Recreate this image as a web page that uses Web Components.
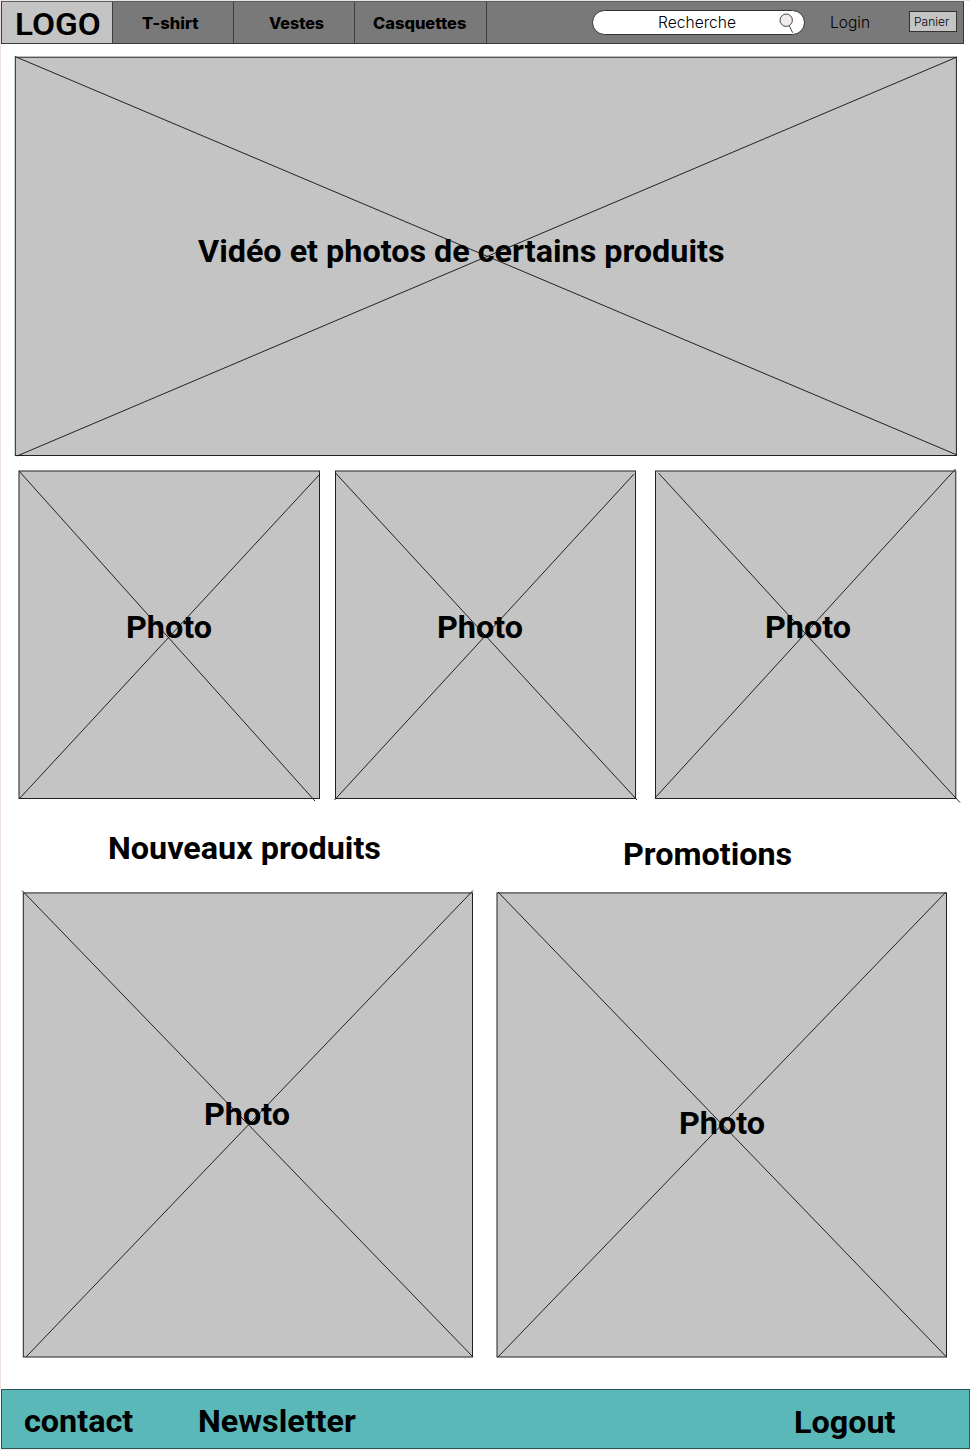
<!DOCTYPE html>
<html lang="fr">
<head>
<meta charset="utf-8">
<title>Boutique</title>
<style>
html,body{margin:0;padding:0;background:#fff}
</style>
</head>
<body>
<shop-page></shop-page>
<script>
// Single line of text; "fit" stretches the line to a given width in px.
class TextLabel extends HTMLElement {
  connectedCallback() {
    const s = this.attachShadow({mode: 'open'});
    s.innerHTML = `<style>
      :host{display:block;white-space:nowrap;font:700 32px/38px Roboto,sans-serif;color:#000}
      :host([kind=logo]){font-weight:600}
      :host([kind=nav]){font:800 15.5px/20px Inter,sans-serif}
      :host([kind=light]){font:300 15.5px/20px Inter,sans-serif}
      :host([kind=small]){font:300 12px/16px Inter,sans-serif}
      span{display:inline-block;transform-origin:0 0;transform:scaleX(1.0105)}
    </style><span><slot></slot></span>`;
    const fit = +this.getAttribute('fit');
    if (fit) {
      const span = s.querySelector('span');
      span.style.transform = `scaleX(${fit / span.offsetWidth})`;
      this.style.width = fit + 'px';
    }
  }
}
customElements.define('text-label', TextLabel);

// Crossed placeholder box. rect = "l t r b" edges, lines = "x1 y1 x2 y2 ..." in box units.
class PhotoFrame extends HTMLElement {
  connectedCallback() {
    const [l, t, r, b] = this.getAttribute('rect').split(' ').map(Number);
    const n = this.getAttribute('lines').split(' ').map(Number);
    const line = i => `<line x1="${n[i]}" y1="${n[i+1]}" x2="${n[i+2]}" y2="${n[i+3]}"/>`;
    this.attachShadow({mode: 'open'}).innerHTML = `<style>
      :host{display:block;position:relative}
      svg{display:block;width:100%;height:100%;overflow:visible}
      ::slotted(*){position:absolute;left:var(--lx);top:var(--ly)}
    </style>
    <svg stroke="#222" stroke-width="1"><rect x="${l}" y="${t}" width="${r-l}" height="${b-t}" fill="#c4c4c4"/>${line(0)}${line(4)}</svg><slot></slot>`;
  }
}
customElements.define('photo-frame', PhotoFrame);

class SearchBox extends HTMLElement {
  constructor() {
    super();
    this.attachShadow({mode: 'open'}).innerHTML = `<style>
      :host{display:flex;box-sizing:border-box;width:213px;height:25px;border:1px solid #333;border-radius:13px;background:#fff;padding:1px 8px 0 65px;justify-content:space-between}
      text-label{margin-top:1px}
      svg{display:block;width:18px;height:22px;overflow:visible}
    </style><text-label kind="light" fit="77.5">Recherche</text-label>
    <svg viewBox="0 0 18 22" fill="none" stroke="#333" stroke-width="0.9"><circle cx="8.2" cy="8.2" r="6.2" fill="#f1eded"/><path d="M11.2 13.7 14.7 20.7"/></svg>`;
  }
}
customElements.define('search-box', SearchBox);

class ShopHeader extends HTMLElement {
  constructor() {
    super();
    this.attachShadow({mode: 'open'}).innerHTML = `<style>
      :host{display:flex;box-sizing:border-box;width:963px;height:43px;margin-left:1px;background:#797979;border:1px solid #3c3a3b;border-top-color:#5c625b}
      .c{box-sizing:border-box;border-right:1px solid #3f3d3e;height:41px;display:flex;align-items:flex-start}
      .logo{width:111px;background:#c4c4c4;padding:3px 0 0 13px}
      .a{width:121px;padding:12px 0 0 29px}
      .b{width:121px;padding:12px 0 0 35px}
      .d{width:132px;padding:12px 0 0 18px}
      search-box{margin:8px 0 0 105px}
      .login{margin:11px 0 0 25px}
      .cart{box-sizing:border-box;width:48px;height:21px;border:1px solid #333;background:#c4c4c4;margin:9px 0 0 39px;padding:2px 0 0 4px}
    </style>
    <div class="c logo"><text-label kind="logo" fit="85.5">LOGO</text-label></div>
    <div class="c a"><text-label kind="nav" fit="56.5">T-shirt</text-label></div>
    <div class="c b"><text-label kind="nav" fit="55">Vestes</text-label></div>
    <div class="c d"><text-label kind="nav" fit="93.5">Casquettes</text-label></div>
    <search-box></search-box>
    <text-label class="login" kind="light" fit="40">Login</text-label>
    <div class="cart"><text-label kind="small" fit="35">Panier</text-label></div>`;
  }
}
customElements.define('shop-header', ShopHeader);

class ShopFooter extends HTMLElement {
  constructor() {
    super();
    this.attachShadow({mode: 'open'}).innerHTML = `<style>
      :host{display:flex;box-sizing:border-box;width:969px;height:60px;margin-left:1px;background:#5ab8b8;border:1px solid #2d5555;padding:12px 74.5px 0 22px}
      .n{margin-left:65.5px}.o{margin:1px 0 0 auto}
    </style>
    <text-label>contact</text-label><text-label class="n">Newsletter</text-label><text-label class="o">Logout</text-label>`;
  }
}
customElements.define('shop-footer', ShopFooter);

class ShopPage extends HTMLElement {
  constructor() {
    super();
    this.attachShadow({mode: 'open'}).innerHTML = `<style>
      :host{display:flex;flex-direction:column;box-sizing:border-box;width:970px;height:1450px;background:linear-gradient(#eee2e1,#eee2e1) 0 0/1px 1389px no-repeat,linear-gradient(#eee5e3,#eee5e3) 0 0/970px 1px no-repeat,linear-gradient(#eee,#eee) 0 1449px/970px 1px no-repeat,#fff;padding-top:1px;overflow:hidden}
      .hero{width:943px;height:400px;margin:12px 0 0 15px;--lx:183px;--ly:176px}
      .three{display:flex;height:329px;margin:14px 0 0 18px}
      .three photo-frame{width:302px}
      .three photo-frame+photo-frame{margin-left:15px}
      .three photo-frame:last-child{margin-left:18px}
      .heads{display:grid;grid-template-columns:515px 1fr;padding:30px 0 0 108px;height:93px;box-sizing:border-box}
      .p{margin-top:6px}
      .two{display:flex;gap:24px;height:466px;padding-left:23px}
      .two photo-frame{width:450px}
      shop-footer{margin-top:31px}
    </style>
    <shop-header></shop-header>
    <photo-frame class="hero" rect="0.3 1.2 941.4 399.5" lines="0 0.5 942 399 942 1 2 400"><text-label>Vidéo et photos de certains produits</text-label></photo-frame>
    <div class="three">
      <photo-frame style="--lx:108px;--ly:138px" rect="1 1 301.5 328.5" lines="1 1 297 331 302 4 2 328"><text-label>Photo</text-label></photo-frame>
      <photo-frame style="--lx:102px;--ly:138px" rect="0.5 1 300.5 328.5" lines="0.5 3 302 330 299 4 -0.5 330"><text-label>Photo</text-label></photo-frame>
      <photo-frame style="--lx:110px;--ly:138px" rect="0.5 1 300.8 328.5" lines="3.5 3 305 332.5 300.5 -1 0 328"><text-label>Photo</text-label></photo-frame>
    </div>
    <div class="heads"><text-label>Nouveaux produits</text-label><text-label class="p">Promotions</text-label></div>
    <div class="two">
      <photo-frame style="--lx:181px;--ly:203px" rect="0.3 0.9 449.5 465" lines="-1 -1.5 450 465 450 -1.5 3 465"><text-label>Photo</text-label></photo-frame>
      <photo-frame style="--lx:182px;--ly:212px" rect="0 0.9 449.5 465" lines="1 0 449.5 465 449 0 1 465"><text-label>Photo</text-label></photo-frame>
    </div>
    <shop-footer></shop-footer>`;
  }
}
customElements.define('shop-page', ShopPage);
</script>
</body>
</html>
